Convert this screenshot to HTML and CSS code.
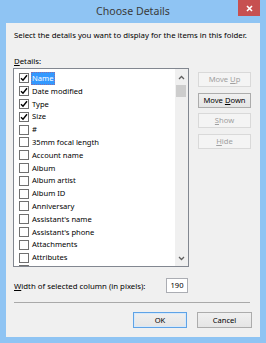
FILE: index.html
```html
<!DOCTYPE html>
<html>
<head>
<meta charset="utf-8">
<link rel="stylesheet" href="styles.css">
</head>
<body>
<div class="window">
  <div class="titlebar">
    <span class="title">Choose Details</span>
    <span class="close"><svg width="7" height="7" viewBox="0 0 7 7"><path d="M1 1L6 6M6 1L1 6" stroke="#fff" stroke-width="1.6" fill="none"/></svg></span>
  </div>
  <div class="client">
    <p class="intro">Select the details you want to display for the items in this folder.</p>
    <div class="label"><u>D</u>etails:</div>
    <div class="main">
      <div class="listbox">
        <div class="rows">
          <div class="row"><span class="cb"><svg width="8" height="8" viewBox="0 0 8 8"><path d="M1 4.2L3 6.3L7 1.2" stroke="#000" stroke-width="1.4" fill="none"/></svg></span><span class="txt sel">Name</span></div>
          <div class="row"><span class="cb"><svg width="8" height="8" viewBox="0 0 8 8"><path d="M1 4.2L3 6.3L7 1.2" stroke="#000" stroke-width="1.4" fill="none"/></svg></span><span class="txt">Date modified</span></div>
          <div class="row"><span class="cb"><svg width="8" height="8" viewBox="0 0 8 8"><path d="M1 4.2L3 6.3L7 1.2" stroke="#000" stroke-width="1.4" fill="none"/></svg></span><span class="txt">Type</span></div>
          <div class="row"><span class="cb"><svg width="8" height="8" viewBox="0 0 8 8"><path d="M1 4.2L3 6.3L7 1.2" stroke="#000" stroke-width="1.4" fill="none"/></svg></span><span class="txt">Size</span></div>
          <div class="row"><span class="cb"></span><span class="txt">#</span></div>
          <div class="row"><span class="cb"></span><span class="txt">35mm focal length</span></div>
          <div class="row"><span class="cb"></span><span class="txt">Account name</span></div>
          <div class="row"><span class="cb"></span><span class="txt">Album</span></div>
          <div class="row"><span class="cb"></span><span class="txt">Album artist</span></div>
          <div class="row"><span class="cb"></span><span class="txt">Album ID</span></div>
          <div class="row"><span class="cb"></span><span class="txt">Anniversary</span></div>
          <div class="row"><span class="cb"></span><span class="txt">Assistant's name</span></div>
          <div class="row"><span class="cb"></span><span class="txt">Assistant's phone</span></div>
          <div class="row"><span class="cb"></span><span class="txt">Attachments</span></div>
          <div class="row"><span class="cb"></span><span class="txt">Attributes</span></div>
          <div class="row"><span class="cb"></span></div>
        </div>
        <div class="scrollbar">
          <div class="arrow"><svg width="7" height="5" viewBox="0 0 7 5"><path d="M1 4L3.5 1.5L6 4" stroke="#606060" stroke-width="1.3" fill="none"/></svg></div>
          <div class="thumb"></div>
          <div class="track"></div>
          <div class="arrow"><svg width="7" height="5" viewBox="0 0 7 5"><path d="M1 1L3.5 3.5L6 1" stroke="#606060" stroke-width="1.3" fill="none"/></svg></div>
        </div>
      </div>
      <div class="side">
        <button class="btn disabled">Move <u>U</u>p</button>
        <button class="btn">Move <u>D</u>own</button>
        <button class="btn disabled"><u>S</u>how</button>
        <button class="btn disabled"><u>H</u>ide</button>
      </div>
    </div>
    <div class="widthrow">
      <span class="wlabel"><u>W</u>idth of selected column (in pixels):</span>
      <span class="num">190</span>
    </div>
    <div class="sep"></div>
    <div class="footer">
      <button class="btn ok">OK</button>
      <button class="btn cancel">Cancel</button>
    </div>
  </div>
</div>
</body>
</html>
```

FILE: styles.css
```css
* { box-sizing: border-box; }
html, body { margin: 0; padding: 0; }
body {
  width: 266px;
  height: 343px;
  overflow: hidden;
  font-family: "Noto Sans", sans-serif;
  font-size: 7.8px;
  color: #000;
}
u { text-underline-offset: 1px; text-decoration-thickness: 1px; }
.window {
  width: 266px;
  height: 343px;
  background: #8fc4f3;
  display: flex;
  flex-direction: column;
}
.titlebar {
  height: 23px;
  position: relative;
  display: flex;
  align-items: center;
  justify-content: center;
  padding-bottom: 1px;
}
.title {
  font-size: 10.6px;
  line-height: 1;
  color: #3a3a3a;
}
.close {
  position: absolute;
  top: 0;
  right: 6px;
  width: 22px;
  height: 16px;
  background: #c75050;
  display: flex;
  align-items: center;
  justify-content: center;
}
.client {
  flex: 1;
  margin: 0 6px 6px;
  background: #f0f0f0;
  padding: 7px 8px 0 7px;
  display: flex;
  flex-direction: column;
}
.intro {
  margin: 0;
  padding-left: 1px;
  line-height: 10px;
  height: 10px;
}
.label {
  margin-top: 16px;
  padding-left: 1px;
  line-height: 10px;
  height: 10px;
}
.main {
  margin-top: 2px;
  display: flex;
  gap: 9px;
}
.listbox {
  width: 176px;
  height: 199px;
  border: 1px solid #828790;
  background: #fff;
  display: flex;
  overflow: hidden;
}
.rows {
  flex: 1;
  padding: 3px 0 0 5px;
  overflow: hidden;
}
.row {
  height: 12.8px;
  display: flex;
  align-items: center;
}
.cb {
  width: 10px;
  height: 10px;
  border: 1px solid #707070;
  background: #fff;
  display: flex;
  align-items: center;
  justify-content: center;
  flex: none;
}
.txt {
  margin-left: 2px;
  padding: 0 2px 0 1px;
  height: 12.8px;
  line-height: 12.8px;
  white-space: nowrap;
  font-size: 7.6px;
}
.sel {
  background: #3399ff;
  color: #fff;
  outline: 1px dotted #8a6fa8;
  outline-offset: -1px;
}
.scrollbar {
  width: 13px;
  background: #f0f0f0;
  display: flex;
  flex-direction: column;
}
.arrow {
  height: 16px;
  display: flex;
  align-items: center;
  justify-content: center;
}
.thumb {
  height: 12px;
  margin: 0 2px 0 1px;
  background: #cdcdcd;
}
.track { flex: 1; }
.side {
  display: flex;
  flex-direction: column;
  gap: 5.7px;
  padding-top: 4px;
}
.btn {
  width: 53px;
  height: 15px;
  font: inherit;
  font-size: 7.6px;
  padding: 0;
  border: 1px solid #acacac;
  background: linear-gradient(#f0f0f0, #e5e5e5);
  color: #000;
  line-height: 13px;
}
.btn.disabled {
  border-color: #d9d9d9;
  background: #f4f4f4;
  color: #a0a0a0;
}
.widthrow {
  margin-top: 11px;
  height: 15px;
  display: flex;
  align-items: center;
  padding-left: 1px;
}
.num {
  margin-left: auto;
  margin-right: 64px;
  width: 22px;
  height: 15px;
  border: 1px solid #abadb3;
  background: #fff;
  text-align: center;
  line-height: 13px;
  font-size: 7.6px;
}
.sep {
  margin: 9px 2px 0 1px;
  border-top: 1px solid #a9a9a9;
}
.footer {
  margin-top: 9px;
  display: flex;
  justify-content: flex-end;
  gap: 10px;
}
.btn.ok {
  width: 54px;
  height: 16px;
  border-color: #5fa3e6;
  box-shadow: inset 0 0 0 1px #d6e9fb;
}
.btn.cancel {
  width: 55px;
  height: 16px;
}
```
